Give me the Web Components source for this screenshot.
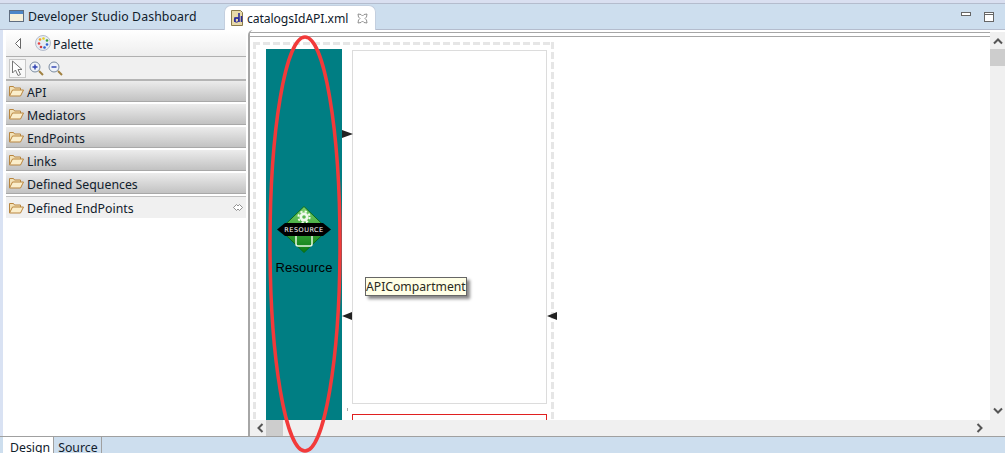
<!DOCTYPE html>
<html>
<head>
<meta charset="utf-8">
<title>catalogsIdAPI.xml</title>
<style>
    html, body { margin: 0; padding: 0; width: 1005px; height: 453px; overflow: hidden; background: #cddeee; }
    body { font: 12.3px "Noto Sans", "DejaVu Sans", sans-serif; color: #10202c; }
</style>
</head>
<body>
<ide-window>
    <editor-tab slot="tabs" icon="window" style="width:208px">Developer Studio Dashboard</editor-tab>
    <editor-tab slot="tabs" icon="xml" active closable>catalogsIdAPI.xml</editor-tab>
    <palette-view slot="palette">
        <palette-drawer>API</palette-drawer>
        <palette-drawer>Mediators</palette-drawer>
        <palette-drawer>EndPoints</palette-drawer>
        <palette-drawer>Links</palette-drawer>
        <palette-drawer>Defined Sequences</palette-drawer>
        <palette-drawer open>Defined EndPoints</palette-drawer>
    </palette-view>
    <api-canvas slot="canvas"></api-canvas>
    <page-tab slot="pages" active>Design</page-tab>
    <page-tab slot="pages">Source</page-tab>
</ide-window>

<script>
/**
 * Outer window: tab row, palette + editor, page tabs
 */
class IdeWindow extends HTMLElement {
    constructor() {
        super();
        this.attachShadow({ mode: 'open' }).innerHTML = `
            <style>
                :host { display: flex; flex-direction: column; width: 1005px; height: 453px; overflow: hidden; }
                .strip { height: 4px; box-sizing: border-box; background: #d9dff0; border-bottom: 1px solid #b4bccd; flex: none; }
                .tabbar { height: 26px; box-sizing: border-box; display: flex; padding-left: 3px; background: #cddeee; border-bottom: 1px solid #b4bccd; flex: none; }
                .buttons { margin-left: auto; display: flex; align-items: flex-start; gap: 13px; padding: 8px 11px 0 0; }
                .main { height: 406px; display: flex; flex: none; background: #fff; border-left: 3px solid #d9e2f3; }
                .pages { flex: 1; display: flex; padding-left: 3px; border-top: 1px solid #a0a0a0; background: #cddeee; }
                svg { display: block; }
            </style>
            <div class="strip"></div>
            <div class="tabbar">
                <slot name="tabs"></slot>
                <div class="buttons">
                    <svg width="10" height="5"><rect x=".5" y=".5" width="9" height="3" fill="#fff" stroke="#666"/></svg>
                    <svg width="10" height="10"><rect x=".5" y=".5" width="9" height="9" fill="#fff" stroke="#666"/><path d="M0 2.500h10" stroke="#666"/></svg>
                </div>
            </div>
            <div class="main">
                <slot name="palette"></slot>
                <slot name="canvas"></slot>
            </div>
            <div class="pages"><slot name="pages"></slot></div>
        `;
    }
}

/**
 * Editor tab
 */
class EditorTab extends HTMLElement {
    constructor() {
        super();
        const root = this.attachShadow({ mode: 'open' });
        const icon = this.getAttribute('icon') === 'xml'
            ? `<svg width="16" height="16" viewBox="0 0 16 16"><path d="M1.500 .5h9l2 2v13h-11z" fill="#e8d9a8" stroke="#8a7a4a"/><path d="M9 3v9M5 12V8h4M11.500 12V6" fill="none" stroke="#2a2a9a" stroke-width="1.600"/><circle cx="6.500" cy="10" r="2.200" fill="none" stroke="#2a2a9a"/></svg>`
            : `<svg width="16" height="13" viewBox="0 0 16 13"><rect x=".5" y=".5" width="14" height="11" fill="#f6f0dc" stroke="#5f6d80"/><rect x="1" y="1" width="13" height="3" fill="#4d86c8"/></svg>`;
        const close = this.hasAttribute('closable')
            ? `<svg class="close" width="11" height="11" viewBox="0 0 11 11"><path d="M1 1l3 .5 1.500 1.500L7 1.500 10 1l-.5 3L8 5.500 9.500 7l.5 3-3-.5L5.500 8 4 9.500 1 10l.5-3L3 5.500 1.500 4z" fill="#fff" stroke="#777" stroke-width=".8"/></svg>`
            : '';
        root.innerHTML = `
            <style>
                :host { display: flex; align-items: center; height: 25px; box-sizing: border-box; padding: 0 0 0 6px; flex: none; white-space: nowrap; letter-spacing: .1px; }
                :host([active]) { background: #fff; height: 25px; margin-top: 1px; border: 1px solid #c3cfdf; border-bottom: none; border-radius: 7px 7px 0 0; padding: 0 8px 0 5px; margin-left: 13px; width: 152px; letter-spacing: -.1px; font-size: 12.2px; }
                .label { margin-left: 3px; }
                :host([active]) .label { margin-left: 1px; }
                .close { margin-left: 9px; }
                svg { display: block; flex: none; }
            </style>
            ${icon}<span class="label"><slot></slot></span>${close}
        `;
    }
}

/**
 * Palette side panel
 */
class PaletteView extends HTMLElement {
    constructor() {
        super();
        this.attachShadow({ mode: 'open' }).innerHTML = `
            <style>
                :host { display: flex; flex-direction: column; box-sizing: border-box; width: 243px; height: 406px; padding-left: 3px; flex: none; background: #fff; }
                .title { height: 27px; box-sizing: border-box; display: flex; align-items: center; padding-left: 9px; width: 240px; border-bottom: 1px solid #b0b0b0; background: linear-gradient(#fff, #eee); flex: none; }
                .title span { margin-left: 2px; padding-top: 2px; }
                .tools { height: 24px; box-sizing: border-box; display: flex; align-items: center; gap: 3px; width: 240px; padding-left: 3px; background: #f0f0f0; border-bottom: 2px solid #b4b4b4; flex: none; }
                .arrow { margin-right: 14px; }
                .tool { width: 17px; height: 19px; box-sizing: border-box; border: 1px solid #c8c8c8; background: #f8f8f8; display: flex; align-items: center; justify-content: center; margin-right: 0; }
                svg { display: block; flex: none; }
            </style>
            <div class="title">
                <svg class="arrow" width="6" height="11" viewBox="0 0 6 11"><path d="M5.500.5L.5 5.500l5 5z" fill="#fff" stroke="#666"/></svg>
                <svg width="16" height="16" viewBox="0 0 16 16"><circle cx="8" cy="8" r="7.500" fill="#e6ecf4" stroke="#b4bccb"/><circle cx="5" cy="4.500" r="1.300" fill="#f0a020"/><circle cx="8.500" cy="3.500" r="1.300" fill="#e8d020"/><circle cx="12" cy="5.500" r="1.300" fill="#40a040"/><circle cx="4" cy="8.500" r="1.300" fill="#e84040"/><circle cx="12" cy="9.500" r="1.300" fill="#3060d0"/><circle cx="6" cy="12" r="1.300" fill="#d04040"/><circle cx="9.500" cy="12.500" r="1.300" fill="#3060d0"/></svg>
                <span>Palette</span>
            </div>
            <div class="tools">
                <div class="tool"><svg width="13" height="17" viewBox="0 0 13 17"><path d="M1.500 1v12l3-3 2.500 5.500 2.500-1L7 9.500h4z" fill="#fff" stroke="#777"/></svg></div>
                <svg width="15" height="15" viewBox="0 0 15 15"><circle cx="6" cy="6" r="5" fill="#eef2f8" stroke="#7a8ba0"/><path d="M3.500 6h5M6 3.500v5" stroke="#2c3fb0" stroke-width="1.400"/><path d="M10 10l4 4" stroke="#a08040" stroke-width="2"/></svg>
                <svg style="margin-left:1px" width="15" height="15" viewBox="0 0 15 15"><circle cx="6" cy="6" r="5" fill="#eef2f8" stroke="#7a8ba0"/><path d="M3.500 6h5" stroke="#2c3fb0" stroke-width="1.400"/><path d="M10 10l4 4" stroke="#a08040" stroke-width="2"/></svg>
            </div>
            <slot></slot>
        `;
    }
}

/**
 * Palette drawer header
 */
class PaletteDrawer extends HTMLElement {
    constructor() {
        super();
        const grip = this.hasAttribute('open')
            ? `<svg class="grip" width="10" height="7" viewBox="0 0 10 7"><path d="M3.500.5L.5 3.500l3 3 1.500-1.500 1.500 1.500 3-3-3-3L5 2z" fill="#fff" stroke="#777" stroke-width=".8"/></svg>`
            : '';
        this.attachShadow({ mode: 'open' }).innerHTML = `
            <style>
                :host { display: flex; align-items: center; box-sizing: border-box; width: 240px; height: 21px; margin-bottom: 2px; padding-left: 3px; flex: none; background: linear-gradient(#ececec, #c2c2c2); border-bottom: 1px solid #a8a8a8; }
                :host([open]) { background: #f0f0f0; border: none; border-top: 1px solid #c0c0c0; height: 22px; }
                span { margin-left: 3px; padding-top: 2px; }
                .grip { margin-left: auto; margin-right: 3px; }
                svg { display: block; flex: none; }
            </style>
            <svg width="15" height="12" viewBox="0 0 15 12"><path d="M.5 11V1.500h4l1 1.500h6v2" fill="#f3e2b8" stroke="#b8853e"/><path d="M.5 11l3-6h11l-3 6z" fill="#fbeecb" stroke="#b8853e"/></svg>
            <span><slot></slot></span>${grip}
        `;
    }
}

/**
 * API diagram canvas with scroll bars
 */
class ApiCanvas extends HTMLElement {
    constructor() {
        super();
        this.attachShadow({ mode: 'open' }).innerHTML = `
            <style>
                :host { display: grid; grid-template-columns: 740px 15px; grid-template-rows: 388px 16px; box-sizing: border-box; width: 757px; height: 406px; margin-left: 2px; padding: 2px 0 0 0; border-left: 2px solid #a6a6a6; border-top-left-radius: 5px; background: #fff; position: relative; flex: none; }
                .top { position: absolute; left: 0; top: 0; width: 740px; height: 5px; border-top: 1px solid #a6a6a6; border-bottom: 1px solid #a6a6a6; box-sizing: border-box; }
                .view { position: relative; overflow: hidden; background: #fff; }
                .dash { position: absolute; left: 3px; top: 10px; width: 301px; height: 420px;
                    background:
                        repeating-linear-gradient(90deg, #e6e6e6 0 7px, transparent 7px 10px) 0 0 / 100% 3px no-repeat,
                        repeating-linear-gradient(180deg, #e6e6e6 0 7px, transparent 7px 10px) 0 0 / 3px 100% no-repeat,
                        repeating-linear-gradient(180deg, #e6e6e6 0 7px, transparent 7px 10px) 100% 0 / 3px 100% no-repeat; }
                .resource { position: absolute; left: 16px; top: 17px; width: 76px; height: 371px; box-sizing: border-box; padding-top: 157px; background: #007e83; display: flex; flex-direction: column; align-items: center; font: 13px "Liberation Sans", sans-serif; color: #000; }
                .resource span { margin-top: 7px; letter-spacing: .2px; }
                .comp { position: absolute; left: 102px; top: 18px; width: 193px; height: 352px; border: 1px solid #dcdcdc; background: #fff; }
                .fault { position: absolute; left: 102px; top: 382px; width: 193px; height: 30px; border: 1px solid #e02020; background: #fff; }
                .dot { position: absolute; left: 97px; top: 376px; width: 1px; height: 3px; background: #aaa; }
                .pin { position: absolute; width: 0; height: 0; border-style: solid; border-width: 4px 10px 4px 0; border-color: transparent #222 transparent transparent; }
                .pin.right { border-width: 4px 0 4px 11px; border-color: transparent transparent transparent #222; }
                .tip { position: absolute; left: 115px; top: 245px; height: 19px; box-sizing: border-box; width: 102px; line-height: 17px; font-size: 12.2px; background: #ffffe6; border: 1px solid #666; box-shadow: 3px 3px 3px #888; white-space: nowrap; color: #2a2a20; }
                .rv { background: #f0f0f0; display: flex; flex-direction: column; align-items: center; }
                .rv .thumb { width: 15px; height: 17px; background: #cdcdcd; }
                .rv .up { height: 12px; padding-top: 5px; }
                .rv .down { margin-top: auto; padding-bottom: 5px; }
                .hs { background: #f0f0f0; display: flex; align-items: center; padding-left: 6px; }
                .hs .thumb { width: 17px; height: 16px; background: #cdcdcd; margin-left: 2px; }
                .hs .next { margin-left: auto; margin-right: 6px; }
                .corner { background: #f0f0f0; }
                svg { display: block; }
                .oval { position: absolute; left: 18px; top: 3px; overflow: visible; }
            </style>
            <div class="view">
                <div class="top"></div>
                <div class="dash"></div>
                <div class="resource">
                    <svg width="56" height="47" viewBox="0 0 56 47">
                        <defs><linearGradient id="g" x1="0" y1="0" x2="0" y2="1"><stop offset="0" stop-color="#7ed06c"/><stop offset=".5" stop-color="#3aa63a"/><stop offset="1" stop-color="#0c7a14"/></linearGradient></defs>
                        <path d="M28 .5L52 23.500 28 46.500 4 23.500z" fill="url(#g)" stroke="#0c6c18"/>
                        <circle cx="28" cy="11" r="4.500" fill="#f0faec"/>
                        <circle cx="28" cy="11" r="5.600" fill="none" stroke="#f0faec" stroke-width="2" stroke-dasharray="2.200 2.200"/>
                        <circle cx="28" cy="11" r="1.800" fill="#58b850"/>
                        <rect x="20" y="27" width="16" height="13" rx="2" fill="none" stroke="#e8f8e4" stroke-width="1.500"/>
                        <path d="M1 23.500l8-6.500h38l8 6.500-8 6.500H9z" fill="#000"/>
                        <text x="28" y="26" font-family="DejaVu Sans, sans-serif" font-size="6.500" fill="#fff" text-anchor="middle" letter-spacing=".5">RESOURCE</text>
                    </svg>
                    <span>Resource</span>
                </div>
                <div class="comp"></div>
                <div class="fault"></div>
                <div class="dot"></div>
                <div class="pin right" style="left:92px;top:98px"></div>
                <div class="pin" style="left:92px;top:280px"></div>
                <div class="pin" style="left:297px;top:280px"></div>
                <div class="tip">APICompartment</div>
            </div>
            <div class="rv">
                <div class="up"><svg width="10" height="8" viewBox="0 0 10 8"><path d="M1 6.500l4-4 4 4" fill="none" stroke="#555" stroke-width="2"/></svg></div>
                <div class="thumb"></div>
                <div class="down"><svg width="10" height="8" viewBox="0 0 10 8"><path d="M1 1.500l4 4 4-4" fill="none" stroke="#555" stroke-width="2"/></svg></div>
            </div>
            <div class="hs">
                <svg width="8" height="10" viewBox="0 0 8 10"><path d="M6.500 1l-4 4 4 4" fill="none" stroke="#555" stroke-width="2"/></svg>
                <div class="thumb"></div>
                <svg class="next" width="8" height="10" viewBox="0 0 8 10"><path d="M1.500 1l4 4-4 4" fill="none" stroke="#555" stroke-width="2"/></svg>
            </div>
            <div class="corner"></div>
            <svg class="oval" width="80" height="424" viewBox="0 0 80 424"><ellipse cx="37" cy="211" rx="35" ry="207" fill="none" stroke="#f23a3a" stroke-width="3.500"/></svg>
        `;
    }
}

/**
 * Design / Source page tab
 */
class PageTab extends HTMLElement {
    constructor() {
        super();
        this.attachShadow({ mode: 'open' }).innerHTML = `
            <style>
                :host { display: block; height: 16px; box-sizing: border-box; padding: 2px 3px 0 4px; line-height: 17px; overflow: hidden; border-right: 1px solid #a0a0a0; flex: none; }
                :host([active]) { background: #fff; padding: 2px 3px 0 7px; }
            </style>
            <slot></slot>
        `;
    }
}

customElements.define('ide-window', IdeWindow);
customElements.define('editor-tab', EditorTab);
customElements.define('palette-view', PaletteView);
customElements.define('palette-drawer', PaletteDrawer);
customElements.define('api-canvas', ApiCanvas);
customElements.define('page-tab', PageTab);
</script>
</body>
</html>
